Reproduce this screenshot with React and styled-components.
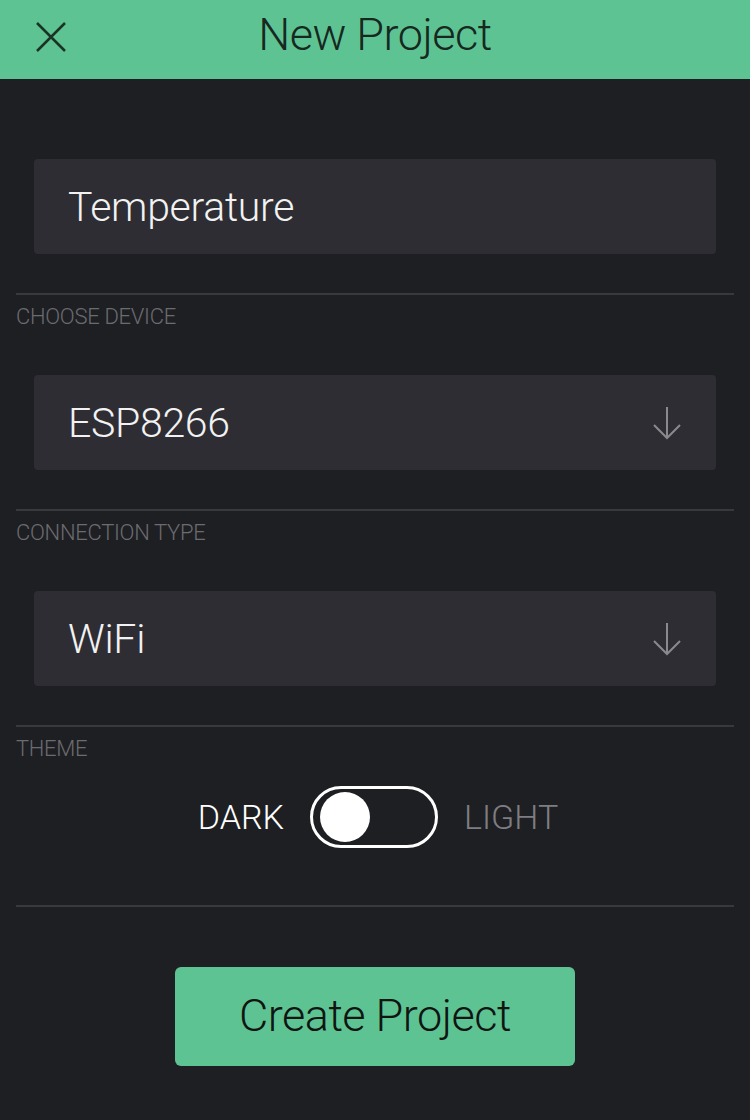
import React from "react";
import styled, { createGlobalStyle } from "styled-components";

const Global = createGlobalStyle`
  html, body { margin: 0; padding: 0; background: #1e1f23; }
  body { font-family: Roboto, "Liberation Sans", sans-serif; }
  * { box-sizing: border-box; }
`;

const Page = styled.div`
  width: 750px;
  min-height: 1120px;
  background: #1e1f23;
  display: flex;
  flex-direction: column;
`;

const Header = styled.header`
  height: 79px;
  background: #5ec393;
  display: flex;
  align-items: center;
  justify-content: center;
  position: relative;
`;

const CloseButton = styled.button`
  position: absolute;
  left: 33px;
  top: 19px;
  width: 36px;
  height: 36px;
  padding: 0;
  border: 0;
  background: transparent;
  display: flex;
  align-items: center;
  justify-content: center;
`;

const Title = styled.h1`
  margin: 0;
  font-family: Roboto, sans-serif;
  font-weight: 300;
  font-size: 45px;
  line-height: 1;
  color: #17281f;
  letter-spacing: -0.5px;
  transform: translateY(-5px);
`;

const Body = styled.main`
  padding: 80px 16px 0;
  display: flex;
  flex-direction: column;
`;

const Field = styled.div`
  margin: 0 18px;
  height: 95px;
  background: #2e2d33;
  border-radius: 4px;
  display: flex;
  align-items: center;
  justify-content: space-between;
  padding: 0 34px;
  font-size: 41px;
  font-weight: 300;
  color: #f2f2f2;
  letter-spacing: -0.3px;
`;

const Divider = styled.hr`
  margin: ${(p) => p.$top || 0}px 0 0;
  border: 0;
  height: 2px;
  background: #38383d;
`;

const Label = styled.div`
  margin-top: 8px;
  margin-bottom: ${(p) => p.$bottom}px;
  font-size: 22px;
  font-weight: 300;
  line-height: 28px;
  color: #6b6b70;
  letter-spacing: -0.3px;
`;

const ToggleRow = styled.div`
  display: flex;
  align-items: center;
  justify-content: center;
  gap: 26px;
  margin-top: 23px;
  padding-left: 6px;
`;

const ToggleText = styled.span`
  font-size: 34px;
  font-weight: 300;
  color: ${(p) => (p.$active ? "#ffffff" : "#7e7e82")};
  letter-spacing: 0px;
`;

const Switch = styled.div`
  width: 128px;
  height: 62px;
  border: 3px solid #ffffff;
  border-radius: 31px;
  display: flex;
  align-items: center;
  padding-left: 7px;
`;

const Knob = styled.div`
  width: 50px;
  height: 50px;
  border-radius: 50%;
  background: #ffffff;
`;

const CreateButton = styled.button`
  align-self: center;
  margin-top: 60px;
  width: 400px;
  height: 99px;
  border: 0;
  border-radius: 6px;
  background: #5ec393;
  color: #101512;
  font-family: Roboto, sans-serif;
  font-weight: 300;
  font-size: 45px;
  letter-spacing: -0.5px;
  padding-bottom: 4px;
`;

const Arrow = () => (
  <svg width="30" height="34" viewBox="0 0 30 34" fill="none">
    <path d="M15 1 V32 M2 19 L15 32 L28 19" stroke="#8a8a8e" strokeWidth="2" />
  </svg>
);

export default function App() {
  return (
    <Page>
      <Global />
      <Header>
        <CloseButton aria-label="close">
          <svg width="32" height="32" viewBox="0 0 32 32">
            <path d="M2 2 L30 30 M30 2 L2 30" stroke="#1b3327" strokeWidth="2.5" />
          </svg>
        </CloseButton>
        <Title>New Project</Title>
      </Header>
      <Body>
        <Field>Temperature</Field>
        <Divider $top={39} />
        <Label $bottom={44}>CHOOSE DEVICE</Label>
        <Field>
          ESP8266
          <Arrow />
        </Field>
        <Divider $top={39} />
        <Label $bottom={44}>CONNECTION TYPE</Label>
        <Field>
          WiFi
          <Arrow />
        </Field>
        <Divider $top={39} />
        <Label $bottom={0}>THEME</Label>
        <ToggleRow>
          <ToggleText $active>DARK</ToggleText>
          <Switch>
            <Knob />
          </Switch>
          <ToggleText>LIGHT</ToggleText>
        </ToggleRow>
        <Divider $top={57} />
        <CreateButton>Create Project</CreateButton>
      </Body>
    </Page>
  );
}
